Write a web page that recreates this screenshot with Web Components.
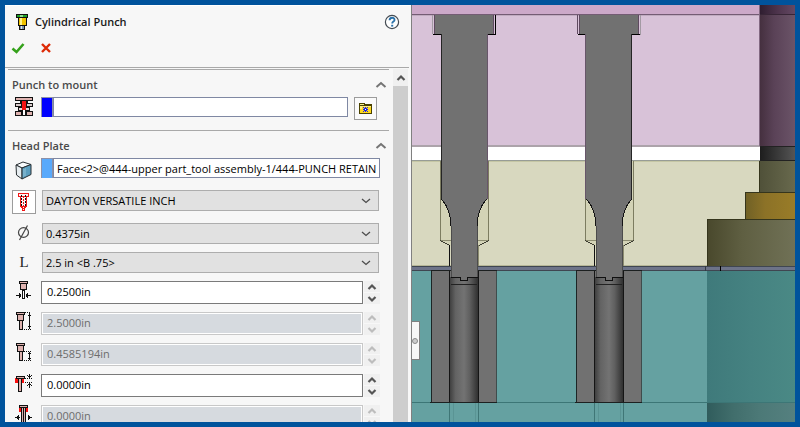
<!DOCTYPE html>
<html lang="en">
<head>
<meta charset="utf-8">
<title>Cylindrical Punch</title>
<style>
html, body { margin: 0; height: 100%; }
body { font: 11px/16px "Open Sans", "Noto Sans", sans-serif; color: #000; overflow: hidden; }
</style>
</head>
<body>
<app-window>
  <property-panel slot="panel" heading="Cylindrical Punch">
    <property-group heading="Punch to mount">
      <selection-field label="Punch to mount" swatch="#0000fe" browse><pm-icon name="mount"></pm-icon></selection-field>
    </property-group>
    <property-group heading="Head Plate">
      <selection-field label="Head plate face" swatch="#59a9fb" value="Face&lt;2&gt;@444-upper part_tool assembly-1/444-PUNCH RETAIN"><pm-icon name="face"></pm-icon></selection-field>
      <choice-field label="Catalog" value="DAYTON VERSATILE INCH" toggle><pm-icon name="catalog"></pm-icon></choice-field>
      <choice-field label="Diameter" value="0.4375in"><pm-icon name="diameter"></pm-icon></choice-field>
      <choice-field label="Length" value="2.5 in &lt;B .75&gt;"><pm-icon name="length"></pm-icon></choice-field>
      <spin-field label="Point diameter" value="0.2500in"><pm-icon name="point"></pm-icon></spin-field>
      <spin-field label="Total length" value="2.5000in" disabled><pm-icon name="total"></pm-icon></spin-field>
      <spin-field label="Point length" value="0.4585194in" disabled><pm-icon name="tip"></pm-icon></spin-field>
      <spin-field label="Head offset" value="0.0000in"><pm-icon name="offset"></pm-icon></spin-field>
      <spin-field label="Clearance" value="0.0000in" disabled><pm-icon name="clearance"></pm-icon></spin-field>
    </property-group>
  </property-panel>
  <model-view slot="view"></model-view>
</app-window>

<script>
const define = (name, render, ready) => customElements.define(name, class extends HTMLElement {
  constructor() {
    super();
    this.attachShadow({ mode: "open" });
  }
  connectedCallback() {
    const t = document.createElement("template");
    t.innerHTML = render(this);
    this.shadowRoot.replaceChildren(t.content.cloneNode(true));
    if (ready) ready(this, this.shadowRoot);
  }
});
const esc = s => (s || "").replace(/&/g, "&amp;").replace(/</g, "&lt;").replace(/"/g, "&quot;");

/* ---------- icons ---------- */
const P = "#dfb3b0";
const icons = {
  punch: [20, 20, `<path d="M4 2h12v4H4z" fill="#111"/><path d="M5 3h10v2H5z" fill="#22a02a"/><path d="M8 3h3v2H8z" fill="#8fe08f"/>
    <path d="M6 6h9v8H6z" fill="#111"/><path d="M7 6h7v7H7z" fill="#f2c400"/><path d="M8 6h2v7H8z" fill="#fff48a"/>
    <path d="M7 13h6v5H7z" fill="#111"/><path d="M8 14h4v3H8z" fill="#7b93ad"/><path d="M9 14h1v3H9z" fill="#dce6ef"/>`],
  ok: [16, 14, `<path d="M2.5 7.5l4 3.5 7-8" fill="none" stroke="#35a11b" stroke-width="2.6" shape-rendering="auto"/>`],
  cancel: [12, 14, `<path d="M2 3l8 8M10 3l-8 8" stroke="#dd2a06" stroke-width="2.4" shape-rendering="auto"/>`],
  help: [16, 16, `<g shape-rendering="auto" fill="none"><circle cx="8" cy="8" r="6.6" fill="#fff" stroke="#444b52" stroke-width="1.2"/>
    <path d="M5.6 6.3c0-3.4 5-3.2 4.9-.4 0 1.7-2.3 1.7-2.3 3.6" stroke="#2a71a9" stroke-width="1.9"/><path d="M7.2 10.8h2v1.8h-2z" fill="#2a71a9"/></g>`],
  mount: [20, 20, `<path d="M1 0h18v4H1zM1 14h18v5H1zM1 6h18v4H1zM6 4h8v2H6zM4 10h12v4H4z" fill="#111"/>
    <path d="M2 1h16v2H2zM2 15h5v3H2zM13 15h5v3h-5z" fill="${P}"/>
    <path d="M2 7h5v2H2zM13 7h5v2h-5z" fill="#d9cccc"/><path d="M5 11h3v2H5zM12 11h3v2h-3z" fill="#e9d9d9"/>
    <path d="M8 4h4v9H8z" fill="#f41111"/><path d="M9 13h2v5H9z" fill="#fff"/>`],
  face: [20, 22, `<g shape-rendering="auto" stroke="#2a3034" stroke-linejoin="round"><path d="M2 7l7-3 8 2.500-9 3.500z" fill="#fafcfd"/>
    <path d="M2 7l6 3v11l-5.500-4z" fill="#e7edf0"/><path d="M8 10l9-3.500v10L8 21z" fill="#5b9dbd"/></g><path d="M9 11v8l3-1.500V10z" fill="#8bbdd3" opacity=".6"/>`],
  catalog: [20, 20, `<path d="M4.500 1.500h10v3h-10zM6.500 4.500v9l2 2v3h2v-3l2-2v-9" fill="#fff3f3" stroke="#f01818" stroke-width="1.500"/>
    <path d="M7.500 3v11M11.500 3v11" stroke="#111" stroke-dasharray="2 1"/><path d="M9.500 4v13" stroke="#f01818" stroke-dasharray="2 1"/>`],
  diameter: [20, 20, `<g shape-rendering="auto" fill="none" stroke="#444"><ellipse cx="9.500" cy="9.500" rx="5" ry="4.800" stroke-width="1.200"/><path d="M13.500 2.500L5.500 17" stroke-width="1.200"/></g>`],
  point: [20, 20, `<path d="M5 0h9v3h-1v6h-7V3H5zM8 9h3v9H8z" fill="#111"/><path d="M6 1h7v1H6zM7 3h5v5H7z" fill="${P}"/><path d="M9 10h1v7H9z" fill="#fff"/>
    <path d="M2 14.500h5M12 14.500h5M5.500 12v5M13.500 12v5M6.500 13v3M12.500 13v3" stroke="#111"/>`],
  total: [20, 20, `<path d="M2 0h9v3h-1v6H9v9H5V9H3V3H2z" fill="#111"/><path d="M3 1h7v1H3zM4 3h5v5H4zM6 9h2v8H6z" fill="${P}"/>
    <path d="M11 .5h6M10 17.500h7" stroke="#111" stroke-dasharray="1 1"/><path d="M15.500 1v16M14 3.500h3M14 14.500h3" stroke="#111"/>`],
  tip: [20, 20, `<path d="M2 0h9v3h-1v6H9v9H5V9H3V3H2z" fill="#111"/><path d="M3 1h7v1H3zM4 3h5v5H4zM6 9h2v8H6z" fill="${P}"/>
    <path d="M10 8.500h8M10 17.500h7" stroke="#111" stroke-dasharray="1 1"/><path d="M15.500 9v8M14 10.500h3M14 15.500h3" stroke="#111"/>`],
  offset: [20, 20, `<path d="M1 4h9v5H1z" fill="#fb1010"/><path d="M2 2h9v3H8v13H4V5H2z" fill="#111"/><path d="M3 3h7v1H3zM5 5h2v12H5z" fill="${P}"/>
    <path d="M11 4.500h8M11 8.500h8" stroke="#111" stroke-dasharray="1 1"/><path d="M15.500 0v4M15.500 9v5M14 2.500h3M13 1.500h1M17 1.500h1M14 10.500h3M13 11.500h1M17 11.500h1" stroke="#111"/>`],
  clearance: [20, 20, `<path d="M5 3h9v4H5z" fill="#fb1010"/><path d="M5 0h9v3h-2v16H7V3H5z" fill="#111"/><path d="M6 1h7v1H6zM8 3h1v15H8zM10 3h1v15h-1z" fill="${P}"/>
    <path d="M1 12.500h5M14 12.500h4M4.500 10v5M14.500 10v5M3.500 11v3M15.500 11v3" stroke="#111"/>`],
  folder: [15, 13, `<path d="M1 1h5l1 1h7v10H1z" fill="#4a4200"/><path d="M2 2h3l1 1H2z" fill="#f4f08c"/><path d="M2 4h11v7H2z" fill="#ffd91c"/><path d="M2 4h11v1H2zM2 5h2v2H2z" fill="#ffee80"/>
    <path d="M5 5h1v1H5zM9 5h1v1H9zM5 9h1v1H5zM9 9h1v1H9zM6 6h3v3H6zM7 5h1v5H7zM5 7h5v1H5z" fill="#1420f0"/><path d="M7 7h1v1H7z" fill="#fff"/>`],
  up: [10, 8, `<path d="M1.500 6L5 2.500 8.500 6" fill="none" stroke="currentColor" stroke-width="2.200" shape-rendering="auto"/>`],
  down: [10, 8, `<path d="M1.500 2L5 5.500 8.500 2" fill="none" stroke="currentColor" stroke-width="2.200" shape-rendering="auto"/>`],
  fold: [12, 8, `<path d="M1.500 6L6 2l4.500 4" fill="none" stroke="#757575" stroke-width="2" shape-rendering="auto"/>`],
  chevron: [10, 8, `<path d="M1 2l4 3.500L9 2" fill="none" stroke="#4c4c4c" stroke-width="1.300" shape-rendering="auto"/>`]
};
define("pm-icon", el => {
  const n = el.getAttribute("name");
  if (n === "length") return `<style>:host{display:block;width:20px;text-align:center;font:15px/20px "Liberation Serif",serif;color:#222}</style>L`;
  const [w, h, body] = icons[n];
  return `<style>:host{display:block}svg{display:block}</style>
    <svg width="${w}" height="${h}" viewBox="0 0 ${w} ${h}" shape-rendering="crispEdges" aria-hidden="true">${body}</svg>`;
});

/* ---------- window frame ---------- */
define("app-window", () => `
<style>
:host { box-sizing: border-box; display: grid; grid-template-columns: minmax(280px, 406fr) 384fr; grid-template-rows: minmax(0, 1fr);
  height: 100vh; border: 5px solid #00539c; background: #f7f7f7; }
</style>
<slot name="panel"></slot><slot name="view"></slot>`);

/* ---------- property panel ---------- */
define("property-panel", el => `
<style>
:host { display: flex; flex-direction: column; min-width: 0; min-height: 0; background: #f7f7f7; border-top: 1px solid #fff; box-sizing: border-box; }
header { display: flex; flex-direction: column; gap: 8px; padding: 6px 9px 12px 5px; margin-right: 2px; border-bottom: 1px solid #a9a9a9; }
.title, .actions { display: flex; align-items: center; }
.title { height: 20px; gap: 3px; padding-left: 2px; }
h1 { flex: 1; margin: 0; font: 600 11px/16px "Open Sans", "Noto Sans", sans-serif; color: #1a1a1a; }
button { border: 0; padding: 0; background: none; color: inherit; }
.actions { gap: 14px; height: 15px; }
.body { display: flex; flex: 1; min-height: 0; padding-top: 1px; }
.groups { flex: 1; min-width: 0; overflow: hidden; padding: 0 4px 0 3px; }
.bar { width: 15px; margin-right: 3px; background: #cdcdcd; }
.bar button { display: grid; place-items: center; width: 100%; height: 17px; background: #f0f0f0; color: #555; }
</style>
<header>
  <div class="title"><pm-icon name="punch"></pm-icon><h1>${esc(el.getAttribute("heading"))}</h1><button aria-label="Help"><pm-icon name="help"></pm-icon></button></div>
  <div class="actions"><button aria-label="OK"><pm-icon name="ok"></pm-icon></button><button aria-label="Cancel"><pm-icon name="cancel"></pm-icon></button></div>
</header>
<div class="body"><div class="groups"><slot></slot></div><div class="bar"><button aria-label="Scroll up"><pm-icon name="up"></pm-icon></button></div></div>`);

define("property-group", el => `
<style>
:host { display: block; border-top: 1px solid #a9a9a9; padding: 6px 9px 9px 4px; }
.head { display: flex; align-items: center; justify-content: space-between; height: 18px; }
h2 { margin: 0; font: 600 11px/16px "Open Sans", "Noto Sans", sans-serif; color: #4a4a4a; }
button { border: 0; padding: 0; margin-right: -8px; width: 14px; display: grid; place-items: center; background: none; }
.rows { display: flex; flex-direction: column; gap: 8px; padding-top: 3px; }
:host([folded]) .rows { display: none; }
</style>
<div class="head"><h2>${esc(el.getAttribute("heading"))}</h2><button aria-label="Collapse ${esc(el.getAttribute("heading"))}"><pm-icon name="fold"></pm-icon></button></div>
<div class="rows"><slot></slot></div>`,
(el, root) => root.querySelector("button").addEventListener("click", () => el.toggleAttribute("folded")));

const rowCss = `
:host { display: grid; grid-template-columns: 24px minmax(0, 1fr); column-gap: 5px; align-items: start; }
input, select { box-sizing: border-box; width: 100%; min-width: 0; margin: 0; border-radius: 0; font: 11px/16px "Open Sans", "Noto Sans", sans-serif; color: #000; outline: 0; }
label, .toggle { display: grid; place-items: center; box-sizing: border-box; width: 24px; }
button { box-sizing: border-box; padding: 0; }`;

define("selection-field", el => `
<style>${rowCss}
:host { min-height: 24px; }
.line { display: flex; align-items: flex-start; }
.swatch { width: 12px; height: 20px; box-sizing: border-box; border: solid #8c90a8; border-width: 1px 1px 0 1px; background: ${el.getAttribute("swatch")}; }
input { flex: 1; height: 20px; padding: 0 0 0 3px; border: 1px solid #7f88a3; background: #fff; }
.browse { display: grid; place-items: center; width: 23px; height: 23px; margin: 0 3px 0 6px; border: 1px solid #9c9c9c; background: #fafafa; }
</style>
<label for="f"><slot></slot></label>
<div class="line"><span class="swatch"></span><input id="f" aria-label="${esc(el.getAttribute("label"))}" value="${esc(el.getAttribute("value"))}">
${el.hasAttribute("browse") ? `<button class="browse" aria-label="Browse"><pm-icon name="folder"></pm-icon></button>` : ""}</div>`);

define("choice-field", el => `
<style>${rowCss}
:host { column-gap: 6px; padding-right: 1px; }
:host([toggle]) { min-height: 25px; }
.toggle { height: 24px; border: 1px solid #9c9c9c; background: #fff; }
.box { display: grid; grid-template-columns: minmax(0, 1fr) 18px; align-items: center; }
select { grid-area: 1 / 1 / 2 / 3; height: 21px; padding: 0 18px 0 3px; border: 1px solid #adadad; background: #e1e1e1; appearance: none; }
pm-icon { grid-area: 1 / 2; pointer-events: none; }
</style>
${el.hasAttribute("toggle") ? `<button class="toggle" aria-label="Catalog table"><slot></slot></button>` : `<label for="f"><slot></slot></label>`}
<div class="box"><select id="f" aria-label="${esc(el.getAttribute("label"))}"><option>${esc(el.getAttribute("value"))}</option></select><pm-icon name="chevron"></pm-icon></div>`);

define("spin-field", el => {
  const off = el.hasAttribute("disabled") ? "disabled" : "";
  return `
<style>${rowCss}
.line { display: flex; gap: 1px; }
input { flex: 1; height: 23px; padding: 0 0 2px 5px; border: 1px solid #7a7a7a; background: #fff; }
input:disabled { border-color: #c8c8c8; box-shadow: inset 0 0 0 1px #fff; background: #d6dadf; color: #6d6d6d; }
.steps { display: grid; grid-template-rows: 1fr 1fr; gap: 1px; width: 16px; }
.steps button { display: grid; place-items: center; border: 0; background: #f0f0f0; color: #555; }
.steps button:disabled { color: #bdbdbd; }
</style>
<label for="f"><slot></slot></label>
<div class="line"><input id="f" aria-label="${esc(el.getAttribute("label"))}" value="${esc(el.getAttribute("value"))}" ${off}>
<span class="steps"><button aria-label="Increase" ${off}><pm-icon name="up"></pm-icon></button><button aria-label="Decrease" ${off}><pm-icon name="down"></pm-icon></button></span></div>`;
});

/* ---------- section view of the die ---------- */
const grad = (id, ...c) => `<linearGradient id="${id}">${c.map(([o, k]) => `<stop offset="${o}" stop-color="${k}"/>`).join("")}</linearGradient>`;
const body = `
  <path d="M440 161h49v80l-11 5h-27l-11-5z" fill="#d3d3b6"/>
  <path d="M440.500 161v80M488.500 161v80" stroke="#7c7c60"/><path d="M440 240.500h12M477 240.500h12" stroke="#8c8c70"/>
  <path d="M440 240.500l10 5M489 240.500l-10 5" stroke="#3c3c30"/><path d="M449.500 245v21" stroke="#111"/><path d="M478.500 245v21" stroke="#8c8c70"/>
  <path d="M431 271h66v131h-66z" fill="#717171"/><path d="M431.500 271v131" stroke="#1c2525"/><path d="M496.500 271v131" stroke="#3f4c4c"/>
  <path d="M431 270.500h66M430 402.500h67" stroke="#1c2020"/>
  <path d="M450 277h28v125h-28z" fill="url(#cyl)"/><path d="M449.500 271v131M478.500 271v131" stroke="#151515"/>
  <path d="M451 284.500h26" stroke="#222"/>
  <path d="M441 34h46v165c-6 6-10 16-10 26v52h-26v-52c0-10-4-20-10-26z" fill="#717171"/>
  <path d="M461 276h7v4h-7z" fill="#717171"/>
  <path d="M441.500 199c6 7 9.500 16 9.500 27M486.500 199c-6 7-9.500 16-9.500 27" fill="none" stroke="#151515"/>
  <path d="M451.500 226v51M477.500 226v51" stroke="#4c4c4c"/>
  <path d="M451 277.500h9.500v3h7v-3h10" fill="none" stroke="#101010"/>
  <path d="M449.500 403v19M478.500 403v19" stroke="#3f7676"/><path d="M453.500 403v19M475.500 403v19" stroke="#5a9494"/>`;
define("model-view", () => `
<style>
:host { display: block; position: relative; min-width: 0; min-height: 0; overflow: hidden; border-left: 1px solid #808080; background: #65a1a1; }
svg { display: block; width: 100%; height: 100%; }
button { position: absolute; left: -1px; top: 316px; width: 9px; height: 39px; padding: 0; border: 1px solid #808080; border-left: 0; background: #f7f7f7; display: grid; place-items: center; }
i { width: 4px; height: 4px; border: 1px solid #8a8a8a; border-radius: 50%; background: #ccc; }
</style>
<svg viewBox="412 5 383 417" preserveAspectRatio="xMinYMin slice" shape-rendering="crispEdges" role="img" aria-label="Section view of two punches">
<defs>
${grad("cyl", [0, "#404040"], [.2, "#636363"], [.5, "#737373"], [.7, "#606060"], [1, "#303030"])}
${grad("plum", [0, "#45303f"], [.4, "#5a4257"], [1, "#6b5468"])}
${grad("plumTop", [0, "#2f1e30"], [.5, "#4d344c"], [1, "#644863"])}
${grad("steel", [0, "#1d1d1d"], [1, "#555"])}
${grad("olive", [0, "#505139"], [1, "#68694d"])}
${grad("gold", [0, "#6f6026"], [.4, "#8c7227"], [1, "#997c28"])}
${grad("flange", [0, "#49482c"], [.4, "#5f5f42"], [1, "#707156"])}
${grad("deep", [0, "#3f7a7b"], [.5, "#458281"], [1, "#4a8985"])}
${grad("deepLow", [0, "#305c5c"], [.3, "#416e6c"], [.6, "#4c7977"], [1, "#55807f"])}
</defs>
<path d="M412 5h383v9H412z" fill="#cca9c9"/><path d="M412 15h383v130H412z" fill="#d8c2d8"/>
<path d="M412 14.500h383" stroke="#745c74"/><path d="M412 15.500h383" stroke="#c0abc0"/>
<path d="M412 147h383v13H412z" fill="#fff"/><path d="M412 145h383v2H412z" fill="#aca3aa"/>
<path d="M412 161h383v105H412z" fill="#d8d8bf"/><path d="M412 160.500h383" stroke="#979c96"/><path d="M412 161.500h383" stroke="#c5c6a4"/>
<path d="M412 265.500h383" stroke="#b7b797"/>
<path d="M760 5h35v10h-35z" fill="url(#plumTop)"/><path d="M760 15h35v131h-35z" fill="url(#plum)"/><path d="M760 147h35v14h-35z" fill="url(#steel)"/>
<path d="M760 161h35v31h-35z" fill="url(#olive)"/><path d="M745 192h50v27h-50z" fill="url(#gold)"/><path d="M707 219h88v47h-88z" fill="url(#flange)"/>
<path d="M759.500 5v141" stroke="#826982"/><path d="M760 14.500h35" stroke="#382637"/><path d="M760 146.500h35M760 160.500h35" stroke="#222"/>
<path d="M759.500 161v31M745.500 192v27M707.500 219v47M745 192.500h50M707 219.500h88" stroke="#35351c"/>
<path d="M412 266h383v5H412z" fill="#6d7388"/><path d="M412 266.500h383M412 270.500h383" stroke="#3f4651"/>
<path d="M705.500 266v5" stroke="#333a45"/><path d="M720.500 266v5" stroke="#000"/>
<path d="M412 271h383v151H412z" fill="#65a1a1"/>
<path d="M707 271h88v131h-88z" fill="url(#deep)"/><path d="M707 403h88v19h-88z" fill="url(#deepLow)"/><path d="M412 402.500h383" stroke="#3c7676"/>
<g>${body}</g><g transform="translate(145 0)">${body}</g>
<path d="M434 15h60v19h-60zM579 15h60v19h-60z" fill="#717171"/>
<path d="M432.500 15v19M640.500 15v20" stroke="#a39aa3" stroke-width="1"/>
<path d="M434.500 15v19M493.500 15v19M577.500 15v19M579.500 15v19M638.500 15v19" stroke="#5f4a60"/>
<path d="M433 34.500h8M487 34.500h9M578 34.500h8M632 34.500h8M495.500 15v20" stroke="#000"/>
<path d="M441.500 34v165M631.500 34v165" stroke="#252525"/><path d="M487.500 34v165M585.500 34v165" stroke="#68566a"/>
</svg>
<button aria-label="Collapse panel"><i></i></button>`);
</script>
</body>
</html>
